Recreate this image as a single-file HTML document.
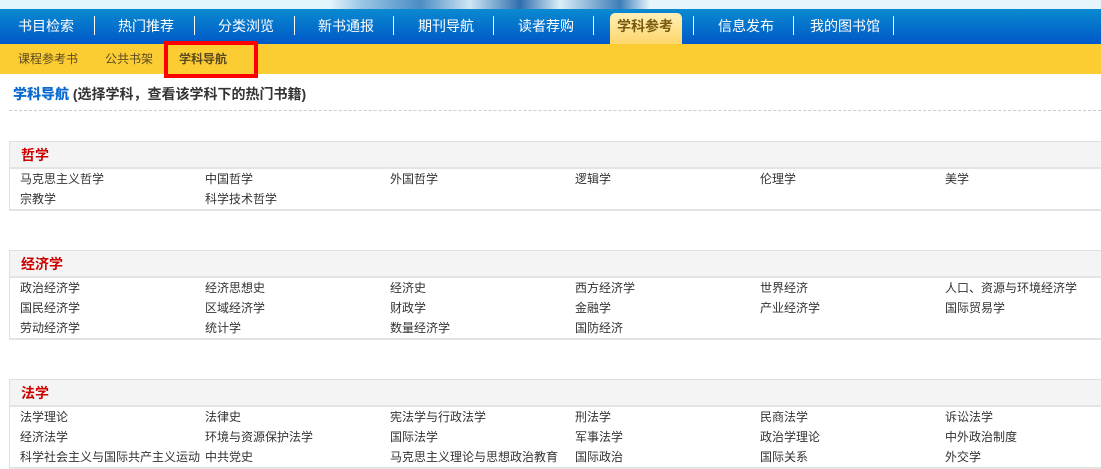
<!DOCTYPE html>
<html><head><meta charset="utf-8"><style>
*{margin:0;padding:0;box-sizing:border-box}
body{width:1101px;height:455px;overflow:hidden;background:#fff;font-family:"Liberation Sans","Noto Sans CJK SC",sans-serif;position:relative}
.ban{position:absolute;left:0;top:0;width:1101px;height:9px;background:linear-gradient(90deg,#e4f4fb 0,#e4f4fb 330px,#9cc8e6 360px,#4b8cc4 420px,#cfe6f5 470px,#2f6fae 520px,#dbeef8 560px,#3d7db8 620px,#e6f5fc 650px,#e6f5fc 100%)}
.nav{position:absolute;left:0;top:9px;width:1101px;height:35px;background:linear-gradient(#0a8ad0,#0058c8)}
.nav span{position:absolute;top:8px;color:#fff;font-size:14px;line-height:18px;white-space:nowrap}
.nav i{position:absolute;top:7px;width:1px;height:19px;background:#fff}
.act{position:absolute;left:610px;top:4px;width:72px;height:31px;border-radius:5px 5px 0 0;background:linear-gradient(#fff0b8,#fed66a)}
.sub{position:absolute;left:0;top:44px;width:1101px;height:30px;background:#fccc33}
.sub span{position:absolute;top:8px;font-size:12px;color:#5a4a20;line-height:14px}
.red{position:absolute;left:164px;top:41px;width:94px;height:37px;border:4px solid #f00}
.tt{position:absolute;left:13px;top:85px;font-size:14px;font-weight:bold;color:#333;line-height:18px}
.tt b{color:#0a6ad0}
.dash{position:absolute;left:9px;top:110px;width:1092px;border-top:1px dashed #ccc}
.box{position:absolute;left:9px;width:1092px;border:1px solid #e0e0e0;border-right:none;border-bottom:2px solid #e4e4e4}
.box h3{height:27px;background:#f4f4f4;border-bottom:2px solid #e4e4e4;color:#c00;font-size:14px;padding-left:11px;line-height:26px}
.box .r{position:relative;height:20px}
.box .r span{position:absolute;top:3px;font-size:12px;color:#333;line-height:14px;white-space:nowrap}
</style></head><body>
<div class="ban"></div>
<div class="nav">
<div class="act"></div>
<span style="left:18px">书目检索</span><i style="left:94px"></i>
<span style="left:118px">热门推荐</span><i style="left:194px"></i>
<span style="left:218px">分类浏览</span><i style="left:294px"></i>
<span style="left:318px">新书通报</span><i style="left:393px"></i>
<span style="left:418px">期刊导航</span><i style="left:493px"></i>
<span style="left:518px">读者荐购</span><i style="left:593px"></i>
<span style="left:617px;color:#7a5a10;font-weight:bold">学科参考</span><i style="left:693px"></i>
<span style="left:718px">信息发布</span><i style="left:793px"></i>
<span style="left:810px">我的图书馆</span><i style="left:893px"></i>
</div>
<div class="sub">
<span style="left:18px">课程参考书</span>
<span style="left:105px">公共书架</span>
<span style="left:179px;font-weight:bold">学科导航</span>
</div>
<div class="red"></div>
<div class="tt"><b>学科导航</b> (选择学科，查看该学科下的热门书籍)</div>
<div class="dash"></div>

<div class="box" style="top:141px"><h3>哲学</h3>
<div class="r"><span style="left:10px">马克思主义哲学</span><span style="left:195px">中国哲学</span><span style="left:380px">外国哲学</span><span style="left:565px">逻辑学</span><span style="left:750px">伦理学</span><span style="left:935px">美学</span></div>
<div class="r"><span style="left:10px">宗教学</span><span style="left:195px">科学技术哲学</span></div>
</div>

<div class="box" style="top:250px"><h3>经济学</h3>
<div class="r"><span style="left:10px">政治经济学</span><span style="left:195px">经济思想史</span><span style="left:380px">经济史</span><span style="left:565px">西方经济学</span><span style="left:750px">世界经济</span><span style="left:935px">人口、资源与环境经济学</span></div>
<div class="r"><span style="left:10px">国民经济学</span><span style="left:195px">区域经济学</span><span style="left:380px">财政学</span><span style="left:565px">金融学</span><span style="left:750px">产业经济学</span><span style="left:935px">国际贸易学</span></div>
<div class="r"><span style="left:10px">劳动经济学</span><span style="left:195px">统计学</span><span style="left:380px">数量经济学</span><span style="left:565px">国防经济</span></div>
</div>

<div class="box" style="top:379px"><h3>法学</h3>
<div class="r"><span style="left:10px">法学理论</span><span style="left:195px">法律史</span><span style="left:380px">宪法学与行政法学</span><span style="left:565px">刑法学</span><span style="left:750px">民商法学</span><span style="left:935px">诉讼法学</span></div>
<div class="r"><span style="left:10px">经济法学</span><span style="left:195px">环境与资源保护法学</span><span style="left:380px">国际法学</span><span style="left:565px">军事法学</span><span style="left:750px">政治学理论</span><span style="left:935px">中外政治制度</span></div>
<div class="r"><span style="left:10px">科学社会主义与国际共产主义运动</span><span style="left:195px">中共党史</span><span style="left:380px">马克思主义理论与思想政治教育</span><span style="left:565px">国际政治</span><span style="left:750px">国际关系</span><span style="left:935px">外交学</span></div>
</div>
</body></html>
